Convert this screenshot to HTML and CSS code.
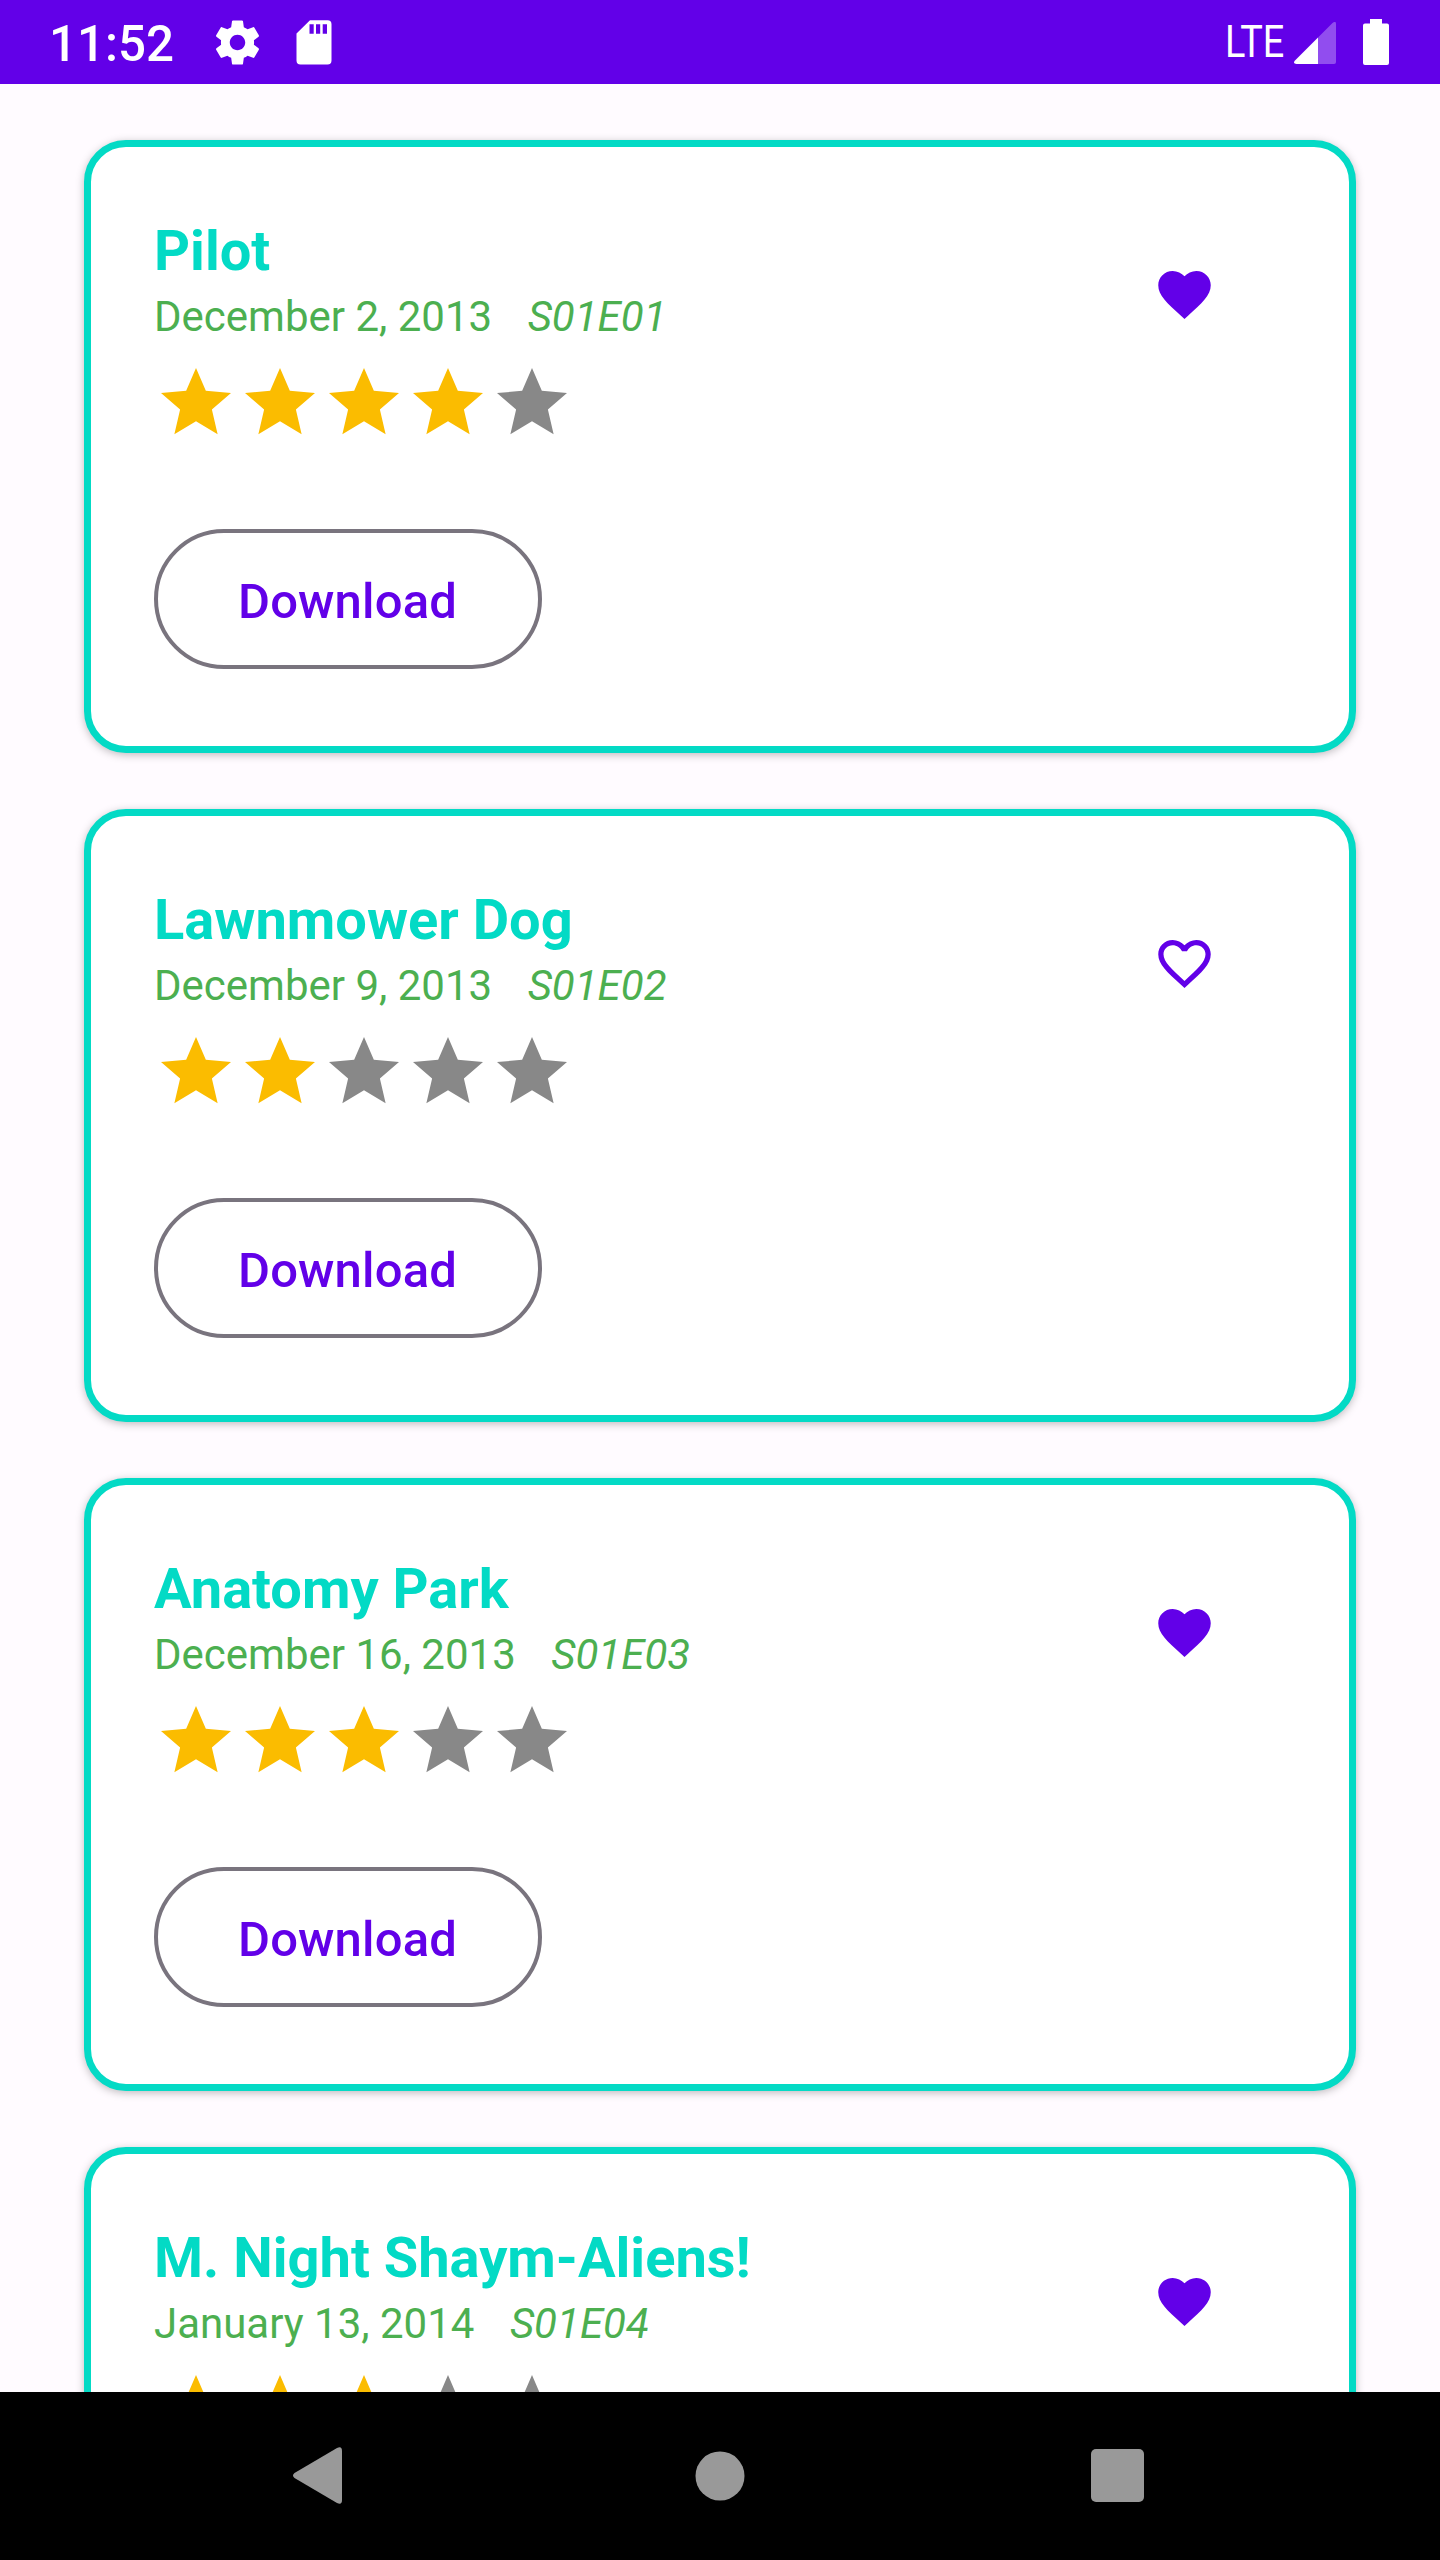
FILE: index.html
```html
<!DOCTYPE html>
<html lang="en">
<head>
<meta charset="utf-8">
<title>Episodes</title>
<link rel="stylesheet" href="styles.css">
</head>
<body>
<svg class="defs" width="0" height="0">
  <symbol id="star" viewBox="0 0 24 24"><path d="M12 2l2.81 6.53 7.19.61-5.46 4.73L18.18 20.900 12 17.2 5.82 20.900l1.64-7.03L2 9.14l7.19-.61z"/></symbol>
  <symbol id="heart" viewBox="0 0 24 24"><path d="M12 21.35l-1.45-1.32C5.4 15.36 2 12.28 2 8.5 2 5.42 4.42 3 7.5 3c1.74 0 3.41.81 4.5 2.09C13.09 3.81 14.76 3 16.5 3 19.58 3 22 5.42 22 8.5c0 3.78-3.4 6.86-8.55 11.54L12 21.35z"/></symbol>
  <symbol id="heart-outline" viewBox="0 0 24 24"><path d="M16.5 3c-1.74 0-3.41.81-4.5 2.09C10.91 3.81 9.24 3 7.5 3 4.42 3 2 5.42 2 8.5c0 3.78 3.4 6.86 8.55 11.54L12 21.35l1.45-1.32C18.6 15.36 22 12.28 22 8.5 22 5.42 19.58 3 16.5 3zm-4.4 15.55l-.1.1-.1-.1C7.14 14.24 4 11.39 4 8.5 4 6.5 5.5 5 7.5 5c1.54 0 3.04.99 3.57 2.36h1.87C13.46 5.99 14.96 5 16.5 5c2 0 3.5 1.5 3.5 3.5 0 2.89-3.14 5.74-7.9 10.05z"/></symbol>
</svg>
<header class="status">
  <span class="clock">11:52</span>
  <svg class="gear" viewBox="0 0 24 24"><path d="M19.43 12.98c.04-.32.07-.64.07-.98s-.03-.66-.07-.98l2.11-1.65c.19-.15.24-.42.12-.64l-2-3.46c-.12-.22-.39-.3-.61-.22l-2.49 1c-.52-.4-1.08-.73-1.69-.98l-.38-2.65C14.46 2.18 14.25 2 14 2h-4c-.25 0-.46.18-.49.42l-.38 2.65c-.61.25-1.17.59-1.69.98l-2.49-1c-.23-.09-.49 0-.61.22l-2 3.46c-.13.22-.07.49.12.64l2.11 1.65c-.04.32-.07.65-.07.98s.03.66.07.98l-2.11 1.65c-.19.15-.24.42-.12.64l2 3.46c.12.22.39.3.61.22l2.49-1c.52.4 1.08.73 1.69.98l.38 2.65c.03.24.24.42.49.42h4c.25 0 .46-.18.49-.42l.38-2.65c.61-.25 1.17-.59 1.69-.98l2.49 1c.23.09.49 0 .61-.22l2-3.46c.12-.22.07-.49-.12-.64l-2.11-1.65zM12 15.5c-1.93 0-3.5-1.57-3.5-3.5s1.57-3.5 3.5-3.5 3.5 1.57 3.5 3.5-1.57 3.5-3.5 3.5z"/></svg>
  <svg class="sd" viewBox="0 0 36 45"><path fill-rule="evenodd" d="M14 0.3H31.5a4 4 0 0 1 4 4V40.500a4 4 0 0 1-4 4H4.500a4 4 0 0 1-4-4V13.500zM13.500 4.300v9.500h4.200V4.300zM20 4.300v9.500h4.200V4.300zM26.700 4.300v9.500H31V4.300z"/></svg>
  <span class="lte">LTE</span>
  <svg class="signal" viewBox="0 0 42 42"><path opacity=".3" d="M24 15.500L38.500 1q3.500-2.500 3.500 1V40q0 2-2 2H24z"/><path d="M24 15.500V42H2.500q-4-.5-1.500-3.500z"/></svg>
  <svg class="battery" viewBox="0 0 26 46"><path d="M7 0H19V4.500H24Q26 4.500 26 6.500V44Q26 46 24 46H2Q0 46 0 44V6.500Q0 4.500 2 4.500H7z"/></svg>
</header>
<main class="list">
  <article class="card">
    <div class="info">
      <h2 class="title">Pilot</h2>
      <p class="meta"><span>December 2, 2013</span><em>S01E01</em></p>
      <div class="stars"><svg class="on"><use href="#star"/></svg><svg class="on"><use href="#star"/></svg><svg class="on"><use href="#star"/></svg><svg class="on"><use href="#star"/></svg><svg><use href="#star"/></svg></div>
      <button class="download">Download</button>
    </div>
    <svg class="fav"><use href="#heart"/></svg>
  </article>
  <article class="card">
    <div class="info">
      <h2 class="title">Lawnmower Dog</h2>
      <p class="meta"><span>December 9, 2013</span><em>S01E02</em></p>
      <div class="stars"><svg class="on"><use href="#star"/></svg><svg class="on"><use href="#star"/></svg><svg><use href="#star"/></svg><svg><use href="#star"/></svg><svg><use href="#star"/></svg></div>
      <button class="download">Download</button>
    </div>
    <svg class="fav"><use href="#heart-outline"/></svg>
  </article>
  <article class="card">
    <div class="info">
      <h2 class="title">Anatomy Park</h2>
      <p class="meta"><span>December 16, 2013</span><em>S01E03</em></p>
      <div class="stars"><svg class="on"><use href="#star"/></svg><svg class="on"><use href="#star"/></svg><svg class="on"><use href="#star"/></svg><svg><use href="#star"/></svg><svg><use href="#star"/></svg></div>
      <button class="download">Download</button>
    </div>
    <svg class="fav"><use href="#heart"/></svg>
  </article>
  <article class="card">
    <div class="info">
      <h2 class="title">M. Night Shaym-Aliens!</h2>
      <p class="meta"><span>January 13, 2014</span><em>S01E04</em></p>
      <div class="stars"><svg class="on"><use href="#star"/></svg><svg class="on"><use href="#star"/></svg><svg class="on"><use href="#star"/></svg><svg><use href="#star"/></svg><svg><use href="#star"/></svg></div>
    </div>
    <svg class="fav"><use href="#heart"/></svg>
  </article>
</main>
<nav class="navbar">
  <svg class="back" viewBox="0 0 49 57"><path d="M44 1Q49 -1.500 49 4V53Q49 58.500 44 56L1.500 31Q-1.500 28.500 1.500 26z"/></svg>
  <svg class="home" viewBox="0 0 50 50"><circle cx="25" cy="25" r="24.500"/></svg>
  <svg class="recent" viewBox="0 0 53 53"><rect width="53" height="53" rx="5"/></svg>
</nav>
</body>
</html>
```
FILE: styles.css
```css
* { box-sizing: border-box; margin: 0; padding: 0; }
body {
  display: flex;
  flex-direction: column;
  width: 1440px;
  height: 2560px;
  overflow: hidden;
  background: #fffbff;
  font-family: Roboto, sans-serif;
}
svg { display: block; flex: none; }
.defs { position: absolute; }
.status {
  display: flex;
  align-items: flex-start;
  flex: none;
  height: 84px;
  padding: 0 51px 0 49px;
  background: #6200e8;
  color: #fff;
  fill: #fff;
}
.clock { width: 162px; font-size: 49.3px; font-weight: 500; line-height: 58px; padding-top: 15px; }
.gear { width: 53px; height: 53px; margin-top: 16px; }
.sd { width: 36px; height: 45px; margin: 20px 0 0 32px; }
.lte {
  margin-left: auto;
  padding-top: 17px;
  font-size: 43.5px;
  line-height: 52px;
  transform: scaleX(.87);
  transform-origin: right;
}
.signal { width: 42px; height: 42px; margin: 22px 0 0 10px; }
.battery { width: 26px; height: 46px; margin: 19px 0 0 27px; }
.list {
  display: flex;
  flex-direction: column;
  flex: 1;
  gap: 56px;
  min-height: 0;
  overflow: hidden;
  padding: 56px 84px 0;
}
.card {
  display: flex;
  justify-content: space-between;
  flex: none;
  height: 613px;
  padding: 71px 133px 0 63px;
  border: 7px solid #03dac5;
  border-radius: 42px;
  background: #fff;
  box-shadow: 0 2px 8px rgba(0, 0, 0, .26);
}
.title { color: #03dac5; font-size: 56px; font-weight: 700; line-height: 66px; }
.meta { display: flex; gap: 35.5px; color: #4caf50; font-size: 42px; line-height: 50px; margin-top: 8px; }
.stars { display: flex; margin-top: 19px; fill: #888; }
.stars svg { width: 84px; height: 84px; }
.stars .on { fill: #fbbc00; }
.download {
  display: block;
  width: 388px;
  height: 140px;
  margin-top: 84px;
  padding: 5px 1px 0 0;
  border: 4px solid #79747e;
  border-radius: 70px;
  background: none;
  color: #6200e8;
  font: 500 49px/58px Roboto, sans-serif;
  letter-spacing: .15px;
}
.fav { width: 63px; height: 63px; margin-top: 45px; fill: #6200e8; }
.navbar {
  display: flex;
  align-items: center;
  flex: none;
  height: 168px;
  padding: 0 0 1px 293px;
  background: #000;
  fill: #999;
}
.back { width: 49px; height: 57px; }
.home { width: 50px; height: 50px; margin-left: 353px; }
.recent { width: 53px; height: 53px; margin-left: 346px; }
```
